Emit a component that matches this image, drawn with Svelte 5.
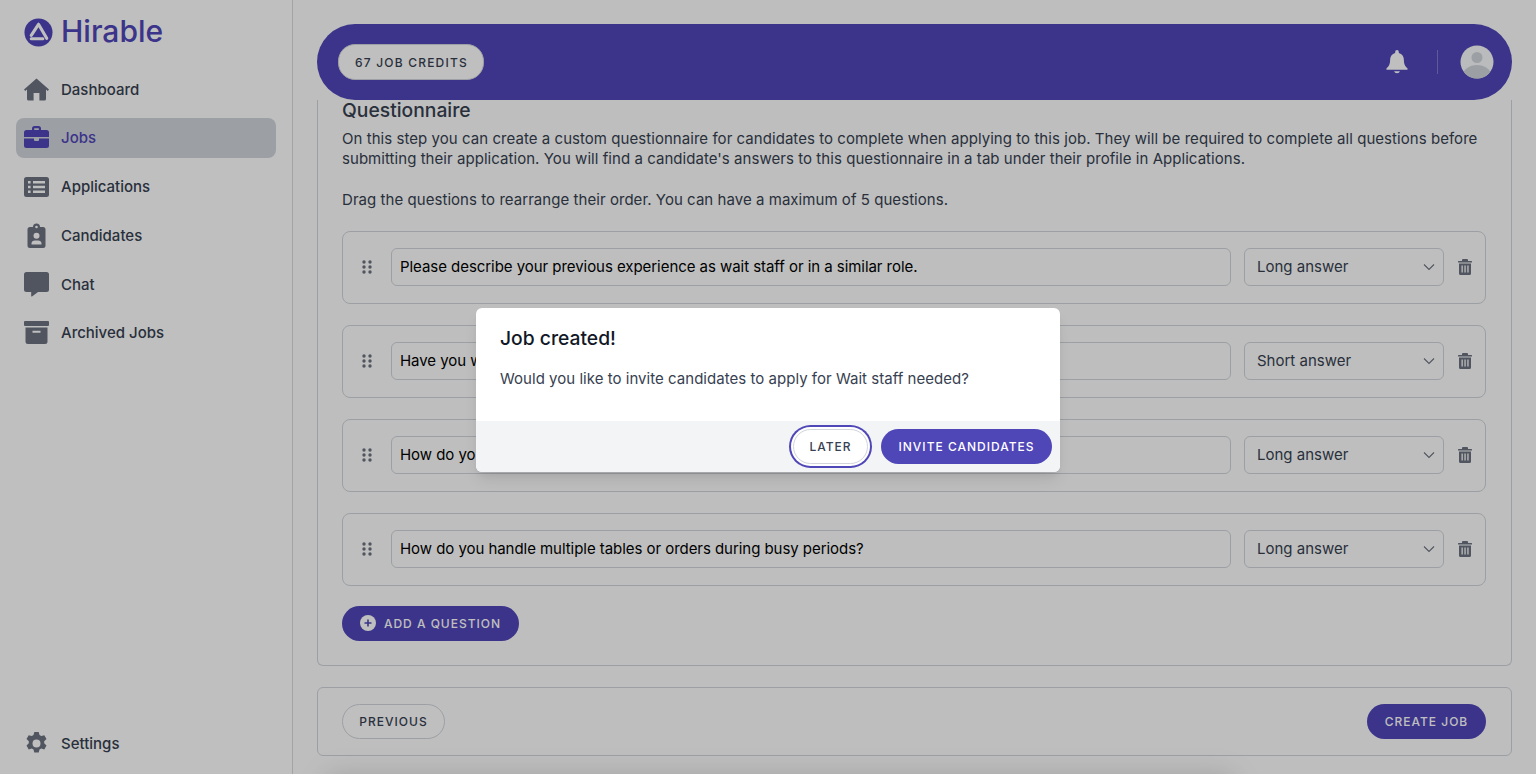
<script>
  const nav = [
    { label: "Dashboard", icon: "home" },
    { label: "Jobs", icon: "jobs", active: true },
    { label: "Applications", icon: "list" },
    { label: "Candidates", icon: "badge" },
    { label: "Chat", icon: "chat" },
    { label: "Archived Jobs", icon: "archive" }
  ];

  const questions = [
    { text: "Please describe your previous experience as wait staff or in a similar role.", type: "Long answer" },
    { text: "Have you worked in a fast-paced restaurant before? If so, please tell us about your duties.", type: "Short answer" },
    { text: "How do you ensure that customers receive excellent service during their visit?", type: "Long answer" },
    { text: "How do you handle multiple tables or orders during busy periods?", type: "Long answer" }
  ];
</script>

{#snippet icon(name)}
  <svg class="nav-icon" viewBox="0 0 25 25" aria-hidden="true">
    {#if name === "home"}
      <path d="M12.500 1.500 0 12.600l1.200 1.400 1.800-1.500V22a1.600 1.600 0 0 0 1.600 1.600h5V16h5.800v7.600h5A1.600 1.600 0 0 0 22 22v-9.500l1.800 1.500 1.200-1.400z" />
    {:else if name === "jobs"}
      <path fill-rule="evenodd" d="M8 5V3.500A2.500 2.500 0 0 1 10.500 1h4A2.500 2.500 0 0 1 17 3.500V5h5.500A2.500 2.500 0 0 1 25 7.500V12H0V7.500A2.500 2.500 0 0 1 2.500 5zm2.200 0h4.600V3.300h-4.600z" />
      <path d="M0 13.500h10V15a1 1 0 0 0 1 1h3a1 1 0 0 0 1-1v-1.500h10v7A2.500 2.500 0 0 1 22.500 23h-20A2.500 2.500 0 0 1 0 20.500z" />
    {:else if name === "list"}
      <path fill-rule="evenodd" d="M2.500 3h20A2.500 2.500 0 0 1 25 5.500v15a2.500 2.500 0 0 1-2.500 2.500h-20A2.500 2.500 0 0 1 0 20.500v-15A2.500 2.500 0 0 1 2.500 3zM4 7v2.400h2.600V7zm5 0v2.400h12V7zm-5 4.800v2.400h2.600v-2.400zm5 0v2.400h12v-2.400zm-5 4.800V19h2.600v-2.400zm5 0V19h12v-2.400z" />
    {:else if name === "badge"}
      <path fill-rule="evenodd" d="M6 4h3a3.500 3.500 0 0 1 7 0h3a2.500 2.500 0 0 1 2.500 2.500v16A2.500 2.500 0 0 1 19 25H6a2.500 2.500 0 0 1-2.500-2.500v-16A2.500 2.500 0 0 1 6 4zm6.500-1.300a1.300 1.300 0 1 0 0 2.600 1.300 1.300 0 0 0 0-2.600zm0 7a3 3 0 1 0 0 6 3 3 0 0 0 0-6zM7.500 21.500h10v-1.300c0-1.500-1.500-2.700-3.300-2.700h-3.400c-1.800 0-3.300 1.200-3.300 2.700z" />
    {:else if name === "chat"}
      <path d="M2.500 0h20A2.500 2.500 0 0 1 25 2.500v15a2.500 2.500 0 0 1-2.500 2.500H14l-6 4.500a.5.500 0 0 1-.8-.4V20H2.500A2.500 2.500 0 0 1 0 17.500v-15A2.500 2.500 0 0 1 2.500 0z" />
    {:else if name === "archive"}
      <path fill-rule="evenodd" d="M1 1h23a1 1 0 0 1 1 1v3a1 1 0 0 1-1 1H1a1 1 0 0 1-1-1V2a1 1 0 0 1 1-1zm.500 6.500h22v14A2.500 2.500 0 0 1 21 24H4a2.500 2.500 0 0 1-2.500-2.500zm7 3.300v2h8v-2z" />
    {/if}
  </svg>
{/snippet}

{#snippet gear()}
  <svg class="nav-icon" viewBox="0 0 25 25" aria-hidden="true">
    <path fill-rule="evenodd" d="M10.300 1h4.400l.8 3.100 1.700 1 3.100-.9 2.200 3.800-2.300 2.300v2l2.300 2.300-2.200 3.800-3.100-.9-1.700 1-.8 3.100h-4.400l-.8-3.100-1.700-1-3.100.9-2.200-3.800 2.300-2.300v-2L2.500 8l2.200-3.800 3.100.9 1.700-1zm2.200 7.500a4 4 0 1 0 0 8 4 4 0 0 0 0-8z" />
  </svg>
{/snippet}

<div class="page">
  <aside class="sidebar">
    <div class="brand">
      <svg class="logo" viewBox="0 0 30 30" aria-hidden="true">
        <circle cx="15" cy="15" r="14.500" fill="#4f46b8" />
        <path d="M15 6.500 7.500 18M15 6.500 23.500 21M7.500 21.500h12" fill="none" stroke="#fff" stroke-width="3.200" stroke-linecap="round" stroke-linejoin="round" />
      </svg>
      <span>Hirable</span>
    </div>
    <nav class="nav">
      {#each nav as item}
        <div class="nav-item" class:active={item.active}>
          {@render icon(item.icon)}
          <span>{item.label}</span>
        </div>
      {/each}
    </nav>
    <div class="nav-item settings">
      {@render gear()}
      <span>Settings</span>
    </div>
  </aside>

  <main class="main">
    <header class="topbar">
      <div class="credits">67 JOB CREDITS</div>
      <div class="top-right">
        <svg class="bell" viewBox="0 0 24 26" aria-hidden="true">
          <path d="M12 0a2 2 0 0 0-2 2v1.200C6.400 4.100 4.500 7 4.500 10.500c0 5-1.500 7.300-3.800 9.200-.7.600-.3 1.800.7 1.800h21.200c1 0 1.400-1.200.7-1.800-2.300-1.900-3.800-4.200-3.800-9.200 0-3.500-1.900-6.400-5.500-7.300V2a2 2 0 0 0-2-2zM8.800 23a3.300 3 0 0 0 6.400 0z" />
        </svg>
        <span class="divider"></span>
        <svg class="avatar" viewBox="0 0 34 34" aria-hidden="true">
          <defs>
            <clipPath id="avatar-clip"><circle cx="17" cy="17" r="16.500" /></clipPath>
          </defs>
          <circle cx="17" cy="17" r="16.500" fill="#f9fafb" />
          <g clip-path="url(#avatar-clip)" fill="#d1d5db">
            <circle cx="17" cy="12.500" r="5.500" />
            <ellipse cx="17" cy="30" rx="14" ry="10" />
          </g>
        </svg>
      </div>
    </header>

    <section class="card">
      <h2>Questionnaire</h2>
      <p class="intro">On this step you can create a custom questionnaire for candidates to complete when applying to this job. They will be required to complete all questions before submitting their application. You will find a candidate's answers to this questionnaire in a tab under their profile in Applications.</p>
      <p class="intro second">Drag the questions to rearrange their order. You can have a maximum of 5 questions.</p>

      <div class="questions">
        {#each questions as q}
          <div class="question">
            <svg class="drag" viewBox="0 0 10 14" aria-hidden="true">
              <circle cx="2" cy="2" r="1.700" /><circle cx="8" cy="2" r="1.700" />
              <circle cx="2" cy="7" r="1.700" /><circle cx="8" cy="7" r="1.700" />
              <circle cx="2" cy="12" r="1.700" /><circle cx="8" cy="12" r="1.700" />
            </svg>
            <div class="input">{q.text}</div>
            <div class="select">
              <span>{q.type}</span>
              <svg class="chevron" viewBox="0 0 12 8" aria-hidden="true">
                <path d="M1 1.500 6 6.500l5-5" fill="none" stroke="currentColor" stroke-width="1.100" />
              </svg>
            </div>
            <svg class="trash" viewBox="0 0 14 16" aria-hidden="true">
              <path fill-rule="evenodd" d="M5 0h4a1 1 0 0 1 1 1v1h3.500a.5.500 0 0 1 .5.500V3.500H0V2.500A.5.500 0 0 1 .5 2H4V1a1 1 0 0 1 1-1zM1 4.500h12v10A1.500 1.500 0 0 1 11.500 16h-9A1.500 1.500 0 0 1 1 14.500zM3.500 6.500v7h1.300v-7zm2.900 0v7h1.300v-7zm2.900 0v7h1.300v-7z" />
            </svg>
          </div>
        {/each}
      </div>

      <button class="btn primary add">
        <svg class="plus" viewBox="0 0 16 16" aria-hidden="true">
          <circle cx="8" cy="8" r="8" fill="#fff" />
          <path d="M8 4.500v7M4.500 8h7" stroke="#4f46b8" stroke-width="1.600" />
        </svg>
        ADD A QUESTION
      </button>
    </section>

    <section class="footer-card">
      <button class="btn outline previous">PREVIOUS</button>
      <button class="btn primary create">CREATE JOB</button>
    </section>
  </main>

  <div class="fold-shadow"></div>
  <div class="overlay"></div>

  <div class="modal">
    <div class="modal-body">
      <h3>Job created!</h3>
      <p>Would you like to invite candidates to apply for Wait staff needed?</p>
    </div>
    <div class="modal-footer">
      <button class="btn outline later">LATER</button>
      <button class="btn primary invite">INVITE CANDIDATES</button>
    </div>
  </div>
</div>

<style>
  :global(body) {
    background: #fff;
    font-family: "Inter", "Open Sans", sans-serif;
  }

  .page {
    display: flex;
    height: 774px;
    overflow: hidden;
    position: relative;
    color: #374151;
  }

  .sidebar {
    flex: none;
    display: flex;
    flex-direction: column;
    border-right: 1px solid #d9dadc;
    padding: 16px 16px 11px;
    width: 260px;
    background: #fff;
  }

  .brand {
    display: flex;
    align-items: center;
    gap: 8px;
    padding-left: 8px;
    height: 30px;
    color: #4f46b8;
    font-size: 30px;
    font-weight: 500;
  }

  .logo {
    width: 29px;
    height: 29px;
    margin-top: 2px;
  }

  .nav {
    display: flex;
    flex-direction: column;
    gap: 8.800px;
    margin-top: 23px;
    flex: 1;
  }

  .nav-item {
    display: flex;
    align-items: center;
    gap: 12px;
    height: 40px;
    padding-left: 8px;
    border-radius: 8px;
    font-size: 15px;
    font-weight: 500;
    color: #374151;
  }

  .nav-item.active {
    background: #d1d5db;
    color: #4f46b8;
  }

  .nav-icon {
    width: 25px;
    height: 25px;
    fill: #6b7280;
    flex: none;
  }

  .active .nav-icon {
    fill: #4f46b8;
  }

  .main {
    flex: 1;
    min-width: 0;
    padding: 24px 24px 0;
    background: #fdfefd;
  }

  .topbar {
    height: 76px;
    border-radius: 38px;
    background: #4f46b8;
    display: flex;
    align-items: center;
    justify-content: space-between;
    padding: 0 18px 0 21px;
  }

  .credits {
    height: 34px;
    padding: 0 15px 0 16px;
    display: flex;
    align-items: center;
    border-radius: 17px;
    background: #fff;
    border: 1px solid #d1d5db;
    font-size: 12px;
    font-weight: 500;
    letter-spacing: 1.200px;
    color: #374151;
  }

  .top-right {
    display: flex;
    align-items: center;
  }

  .bell {
    width: 22px;
    height: 24px;
    fill: #fff;
  }

  .divider {
    width: 1px;
    height: 24px;
    background: #8079cc;
    margin: 0 22px 0 29px;
  }

  .avatar {
    width: 34px;
    height: 34px;
  }

  .card {
    height: 566px;
    box-sizing: border-box;
    padding: 0 25px 0 24px;
    border: 1px solid #d1d5db;
    border-top: 0;
    border-radius: 0 0 6px 6px;
  }

  h2 {
    margin: 0;
    font-size: 19.300px;
    line-height: 20px;
    font-weight: 500;
    color: #374151;
  }

  .intro {
    margin: 9px 0 0;
    font-size: 15px;
    line-height: 20.300px;
    letter-spacing: 0.050px;
    color: #374151;
  }

  .intro.second {
    margin-top: 20px;
  }

  .questions {
    display: flex;
    flex-direction: column;
    gap: 21px;
    margin-top: 21px;
  }

  .question {
    height: 73px;
    box-sizing: border-box;
    display: flex;
    align-items: center;
    border: 1px solid #d1d5db;
    border-radius: 8px;
    padding: 0 13px 0 19px;
  }

  .drag {
    width: 10px;
    height: 14px;
    fill: #6b7280;
    flex: none;
    margin-right: 19px;
  }

  .input {
    flex: 1;
    height: 38px;
    display: flex;
    align-items: center;
    box-sizing: border-box;
    padding: 0 8px 2px;
    border: 1px solid #d1d5db;
    border-radius: 6px;
    font-size: 15px;
    letter-spacing: -0.050px;
    color: #000;
    white-space: nowrap;
    overflow: hidden;
  }

  .select {
    width: 200px;
    height: 38px;
    margin-left: 13px;
    display: flex;
    align-items: center;
    justify-content: space-between;
    box-sizing: border-box;
    padding: 0 8px 0 12px;
    border: 1px solid #d1d5db;
    border-radius: 6px;
    font-size: 15px;
    color: #374151;
    flex: none;
  }

  .select span {
    margin-bottom: 2px;
  }

  .chevron {
    width: 12px;
    height: 8px;
    color: #6b7280;
  }

  .trash {
    width: 14px;
    height: 16px;
    fill: #6b7280;
    margin-left: 14px;
    flex: none;
  }

  .btn {
    display: inline-flex;
    align-items: center;
    justify-content: center;
    height: 35px;
    padding: 0 17px;
    border-radius: 18px;
    font-family: inherit;
    font-size: 12px;
    font-weight: 500;
    letter-spacing: 1px;
    border: 1px solid transparent;
    box-sizing: border-box;
  }

  .btn.primary {
    background: #4f46b8;
    color: #fff;
  }

  .btn.outline {
    background: #fff;
    border-color: #d1d5db;
    color: #374151;
  }

  .add {
    margin-top: 20px;
    gap: 8px;
    width: 177px;
    padding: 0;
  }

  .plus {
    width: 16px;
    height: 16px;
  }

  .footer-card {
    margin-top: 21px;
    height: 69px;
    box-sizing: border-box;
    border: 1px solid #d1d5db;
    border-radius: 6px;
    display: flex;
    align-items: center;
    justify-content: space-between;
    padding: 0 25px 0 24px;
  }

  .previous {
    width: 103px;
    padding: 0;
  }

  .create {
    width: 119px;
    padding: 0;
  }

  /* shadow of something just under the fold */
  .fold-shadow {
    position: absolute;
    left: 340px;
    top: 790px;
    width: 880px;
    height: 40px;
    box-shadow: 0 0 30px 14px rgba(0, 0, 0, 0.16);
  }

  .overlay {
    position: absolute;
    inset: 0;
    background: rgba(0, 0, 0, 0.25);
  }

  .modal {
    position: absolute;
    left: 476px;
    top: 308px;
    width: 584px;
    height: 164px;
    background: #fff;
    border-radius: 6px;
    overflow: hidden;
    display: flex;
    flex-direction: column;
    box-shadow: 0 10px 15px -3px rgba(0, 0, 0, 0.1), 0 4px 6px -2px rgba(0, 0, 0, 0.05);
  }

  .modal-body {
    flex: 1;
    padding: 18px 24px 0;
  }

  h3 {
    margin: 0;
    font-size: 19.300px;
    line-height: 24px;
    font-weight: 500;
    color: #111827;
  }

  .modal-body p {
    margin: 19px 0 0;
    font-size: 15px;
    line-height: 20px;
    letter-spacing: 0.030px;
    color: #374151;
  }

  .modal-footer {
    height: 51px;
    background: #f3f4f6;
    display: flex;
    align-items: center;
    justify-content: flex-end;
    gap: 13px;
    padding-right: 8px;
  }

  .later {
    width: 75px;
    box-shadow: 0 0 0 2px #fff, 0 0 0 4px #4f46b8;
  }

  .invite {
    width: 171px;
    padding: 0;
  }
</style>
